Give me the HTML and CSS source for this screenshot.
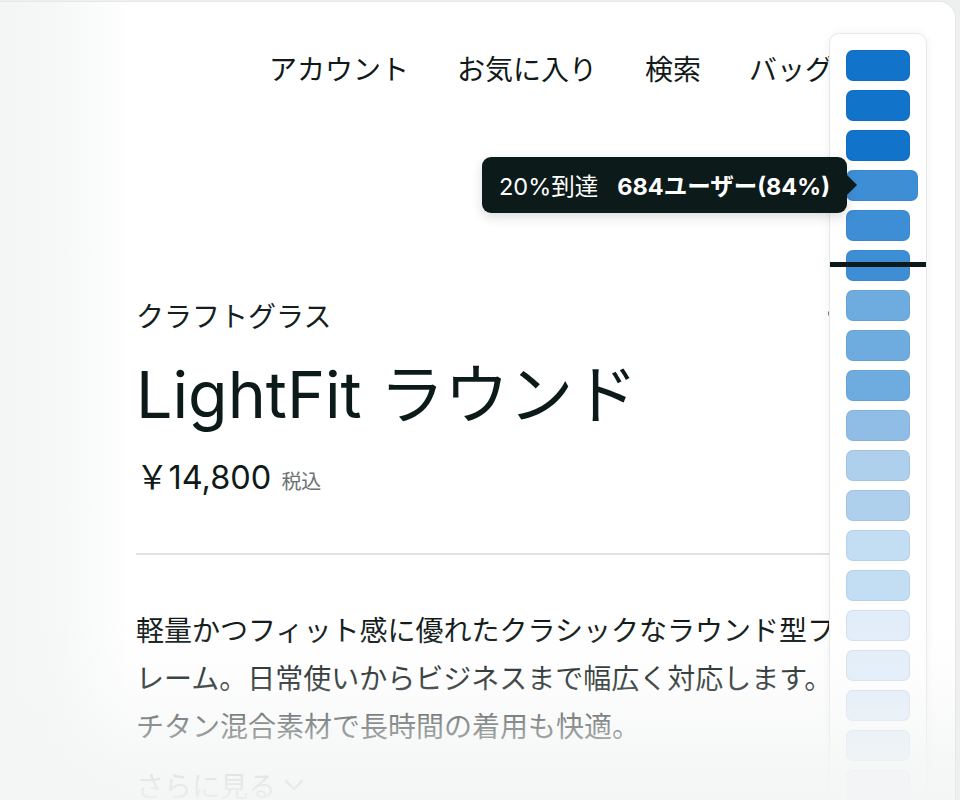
FILE: index.html
```html
<!DOCTYPE html>
<html lang="ja">
<head>
<meta charset="utf-8">
<title>LightFit ラウンド</title>
<link rel="stylesheet" href="styles.css">
</head>
<body>
<div class="frame">
  <nav class="nav">
    <a class="nav-item">アカウント</a>
    <a class="nav-item">お気に入り</a>
    <a class="nav-item">検索</a>
    <a class="nav-item">バッグ</a>
  </nav>

  <main class="product">
    <div class="brand-row">
      <span class="brand">クラフトグラス</span>
      <svg class="fav" width="20" height="20" viewBox="0 0 24 24" fill="none" stroke="#0f1a19" stroke-width="2.4" stroke-linejoin="round"><path d="M12 20.5s-8-4.8-8-10.6A4.4 4.4 0 0 1 12 7.6a4.4 4.4 0 0 1 8 2.3c0 5.8-8 10.6-8 10.6z"/></svg>
    </div>
    <h1 class="title">LightFit ラウンド</h1>
    <div class="price">
      <span class="amount">￥14,800</span>
      <span class="tax">税込</span>
    </div>
    <hr class="divider">
    <p class="desc">軽量かつフィット感に優れたクラシックなラウンド型フレーム。日常使いからビジネスまで幅広く対応します。チタン混合素材で長時間の着用も快適。</p>
    <div class="more">さらに見る<svg class="chev" width="24" height="24" viewBox="0 0 24 24" fill="none" stroke="currentColor" stroke-width="2.2" stroke-linecap="round" stroke-linejoin="round"><polyline points="4,8 12,16 20,8"/></svg></div>
  </main>

  <aside class="minimap">
    <div class="cell l1"></div>
    <div class="cell l1"></div>
    <div class="cell l1"></div>
    <div class="cell l2 hover"></div>
    <div class="cell l2"></div>
    <div class="cell l2"></div>
    <div class="cell l3"></div>
    <div class="cell l3"></div>
    <div class="cell l3"></div>
    <div class="cell l4"></div>
    <div class="cell l5"></div>
    <div class="cell l5"></div>
    <div class="cell l6"></div>
    <div class="cell l6"></div>
    <div class="cell l7"></div>
    <div class="cell l7"></div>
    <div class="cell l7"></div>
    <div class="cell l7"></div>
    <div class="cell l7"></div>
    <div class="marker"></div>
  </aside>

  <div class="tooltip"><span class="tt-label">20%到達</span><strong class="tt-value">684ユーザー(84%)</strong></div>

  <div class="fade"></div>
</div>
</body>
</html>
```

FILE: styles.css
```css
* { box-sizing: border-box; }
html, body { margin: 0; height: 100%; }
body {
  background: #eeefef;
  font-family: Inter, "Noto Sans CJK JP", sans-serif;
  color: #0f1a19;
  overflow: hidden;
}
.frame {
  position: relative;
  margin: 2px 5px 0 0;
  height: 798px;
  background: linear-gradient(90deg, #f4f5f5 0, #f6f7f7 55px, #fafbfb 95px, #ffffff 130px);
  border-top-right-radius: 16px;
  overflow: hidden;
  box-shadow: 0 0 0 1px #e6e7e7;
}

/* nav */
.nav {
  display: flex;
  justify-content: flex-end;
  gap: 48px;
  padding: 46px 122px 0 0;
  font-family: "Noto Sans CJK JP", sans-serif;
  font-size: 28px;
  line-height: 40px;
}
.nav-item { color: #111a19; text-decoration: none; white-space: nowrap; }

/* product */
.product {
  width: 846px;
  padding-left: 136px;
}
.brand-row {
  margin-top: 207px;
  height: 40px;
  display: flex;
  align-items: center;
  justify-content: space-between;
}
.brand {
  font-family: "Noto Sans CJK JP", sans-serif;
  font-size: 28px;
  line-height: 40px;
  color: #161f1e;
}
.fav { display: block; }
.title {
  margin: 20px 0 0;
  font-size: 64.5px;
  line-height: 80px;
  font-weight: 400;
  color: #0c1a19;
}
.price {
  margin-top: 21px;
  display: flex;
  align-items: baseline;
  gap: 10px;
  height: 44px;
  line-height: 44px;
}
.amount { font-size: 32.5px; color: #0f1a19; }
.tax { font-size: 20px; color: #6b7271; font-family: "Noto Sans CJK JP", sans-serif; }
.divider {
  margin: 53px 0 0;
  border: 0;
  height: 2px;
  background: #dfe2e2;
}
.desc {
  margin: 50px 0 0;
  width: 710px;
  font-family: "Noto Sans CJK JP", sans-serif;
  font-size: 28px;
  line-height: 48px;
  color: #111a19;
}
.more {
  margin-top: 16px;
  display: flex;
  align-items: center;
  gap: 6px;
  font-family: "Noto Sans CJK JP", sans-serif;
  font-size: 28px;
  line-height: 40px;
  color: #6b7271;
}
.chev { display: block; }

/* minimap panel */
.minimap {
  position: absolute;
  left: 829px;
  top: 31px;
  width: 98px;
  height: 820px;
  padding: 16px;
  background: #fff;
  border: 1px solid #e7e8e8;
  border-radius: 10px;
  box-shadow: 0 0 10px rgba(0, 0, 0, 0.06);
  display: flex;
  flex-direction: column;
  gap: 9px;
}
.cell {
  width: 64px;
  height: 31px;
  flex: none;
  border-radius: 7px;
  border: 1px solid rgba(20, 70, 130, 0.08);
}
.cell.hover { width: 72px; }
.l1 { background: #1173c9; }
.l2 { background: #3e8ed5; }
.l3 { background: #6eabdf; }
.l4 { background: #8fbde6; }
.l5 { background: #aed0ed; }
.l6 { background: #c3ddf2; }
.l7 { background: #e1edf9; }
.marker {
  position: absolute;
  left: 0;
  right: 0;
  top: 228px;
  height: 5px;
  background: #0c1a19;
}

/* tooltip */
.tooltip {
  position: absolute;
  left: 482px;
  top: 155px;
  height: 56px;
  padding: 0 17px;
  display: flex;
  align-items: center;
  gap: 19px;
  background: #0c1a19;
  color: #fff;
  border-radius: 9px;
  font-size: 23.5px;
  white-space: nowrap;
  box-shadow: 0 4px 12px rgba(0, 0, 0, 0.14);
}
.tooltip::after {
  content: "";
  position: absolute;
  right: -10px;
  top: 50%;
  margin-top: -10px;
  border-style: solid;
  border-width: 10px 0 10px 10px;
  border-color: transparent transparent transparent #0c1a19;
}
.tt-label { font-weight: 400; }
.tt-value { font-weight: 700; }

/* bottom fade */
.fade {
  position: absolute;
  left: 0;
  right: 0;
  bottom: 0;
  height: 200px;
  pointer-events: none;
  background: linear-gradient(180deg,
    rgba(244, 245, 245, 0) 0,
    rgba(244, 245, 245, 0) 20px,
    rgba(244, 245, 245, 0.2) 80px,
    rgba(244, 245, 245, 0.52) 122px,
    rgba(244, 245, 245, 0.86) 170px,
    rgba(244, 245, 245, 0.95) 200px);
}
```
